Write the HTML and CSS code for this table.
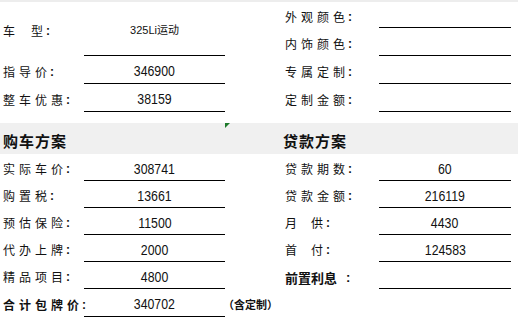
FILE: index.html
```html
<!DOCTYPE html>
<html lang="zh">
<head>
<meta charset="utf-8">
<link rel="stylesheet" href="styles.css">
</head>
<body>
<div class="sheet">
  <div class="lbl r12 c1">车<span class="gap"></span>型<span class="colon">:</span></div>
  <div class="val small r12 c2">325Li运动</div>
  <div class="lbl rt r1 c4">外观颜色<span class="colon">:</span></div>
  <div class="val r1 c5"></div>
  <div class="lbl rt r2 c4">内饰颜色<span class="colon">:</span></div>
  <div class="val r2 c5"></div>

  <div class="lbl r3 c1">指导价<span class="colon">:</span></div>
  <div class="val r3 c2"><span class="num">346900</span></div>
  <div class="lbl rt r3 c4">专属定制<span class="colon">:</span></div>
  <div class="val r3 c5"></div>

  <div class="lbl r4 c1">整车优惠<span class="colon">:</span></div>
  <div class="val r4 c2"><span class="num">38159</span></div>
  <div class="lbl rt r4 c4">定制金额<span class="colon">:</span></div>
  <div class="val r4 c5"></div>

  <div class="band"></div>
  <div class="head r6 c1">购车方案</div>
  <div class="mark r6 c3"></div>
  <div class="head rt r6 c4">贷款方案</div>

  <div class="lbl r7 c1">实际车价<span class="colon">:</span></div>
  <div class="val r7 c2"><span class="num">308741</span></div>
  <div class="lbl rt r7 c4">贷款期数<span class="colon">:</span></div>
  <div class="val r7 c5"><span class="num">60</span></div>

  <div class="lbl r8 c1">购置税<span class="colon">:</span></div>
  <div class="val r8 c2"><span class="num">13661</span></div>
  <div class="lbl rt r8 c4">贷款金额<span class="colon">:</span></div>
  <div class="val r8 c5"><span class="num">216119</span></div>

  <div class="lbl r9 c1">预估保险<span class="colon">:</span></div>
  <div class="val r9 c2"><span class="num">11500</span></div>
  <div class="lbl rt r9 c4">月<span class="gap2"></span>供<span class="colon">:</span></div>
  <div class="val r9 c5"><span class="num">4430</span></div>

  <div class="lbl r10 c1">代办上牌<span class="colon">:</span></div>
  <div class="val r10 c2"><span class="num">2000</span></div>
  <div class="lbl rt r10 c4">首<span class="gap2"></span>付<span class="colon">:</span></div>
  <div class="val r10 c5"><span class="num">124583</span></div>

  <div class="lbl r11 c1">精品项目<span class="colon">:</span></div>
  <div class="val r11 c2"><span class="num">4800</span></div>
  <div class="lbl rt bold13 r11 c4">前置利息<span class="colon wide">:</span></div>
  <div class="val r11 c5"></div>

  <div class="lbl bold r12b c1">合计包牌价<span class="colon">:</span></div>
  <div class="val r12b c2"><span class="num">340702</span></div>
  <div class="note r12b c3">（含定制）</div>
</div>
</body>
</html>
```
FILE: styles.css
```css
html, body {
  margin: 0;
  padding: 0;
  background: #ffffff;
}
.sheet {
  width: 518px;
  border-top: 2px solid #ededed;
  display: grid;
  grid-template-columns: 84px 141px 58px 96px 132px 7px;
  grid-template-rows: 26px 28px 28px 28px 11px 31px 27px 27px 27px 27px 27px 28px;
  font-family: "Noto Sans CJK SC", "Liberation Sans", sans-serif;
  color: #111;
}
.c1 { grid-column: 1; }
.c2 { grid-column: 2; }
.c3 { grid-column: 3; }
.c4 { grid-column: 4; }
.c5 { grid-column: 5; }
.r1 { grid-row: 1; }
.r2 { grid-row: 2; }
.r12 { grid-row: 1 / span 2; }
.r3 { grid-row: 3; }
.r4 { grid-row: 4; }
.r6 { grid-row: 6; }
.r7 { grid-row: 7; }
.r8 { grid-row: 8; }
.r9 { grid-row: 9; }
.r10 { grid-row: 10; }
.r11 { grid-row: 11; }
.r12b { grid-row: 12; }

.lbl {
  display: flex;
  align-items: center;
  padding: 3px 0 0 3px;
  font-size: 12px;
  letter-spacing: 4px;
  white-space: nowrap;
  line-height: 1;
}
.lbl.rt { padding-left: 2px; }
.colon {
  font-family: "Liberation Sans", sans-serif;
  font-weight: 700;
  letter-spacing: 0;
  margin-left: -1px;
}
.colon.wide { margin-left: 9px; }
.gap { display: inline-block; width: 12px; }
.gap2 { display: inline-block; width: 10px; }
.bold { font-weight: 700; }
.bold13 { font-weight: 700; font-size: 13px; letter-spacing: 0; }

.val {
  display: flex;
  align-items: center;
  justify-content: center;
  padding-top: 3px;
  border-bottom: 1px solid #000;
  font-family: "Liberation Sans", sans-serif;
  font-size: 14px;
  line-height: 1;
}
.num {
  display: inline-block;
  transform: scaleX(0.88);
}
.val.small {
  font-family: "Liberation Sans", "Noto Sans CJK SC", sans-serif;
  font-size: 11px;
}

.band {
  grid-column: 1 / -1;
  grid-row: 6;
  background: #f0f0f0;
}
.head {
  display: flex;
  align-items: center;
  padding: 4px 0 0 3px;
  font-size: 15px;
  font-weight: 700;
  letter-spacing: 1px;
  line-height: 1;
  white-space: nowrap;
}
.head.rt { padding-left: 0; }
.mark {
  width: 0;
  height: 0;
  border-top: 5px solid #1d7a2b;
  border-right: 5px solid transparent;
}
.note {
  display: flex;
  align-items: center;
  padding: 3px 0 0 0;
  margin-left: -2px;
  font-size: 11px;
  font-weight: 700;
  white-space: nowrap;
  line-height: 1;
}
```
